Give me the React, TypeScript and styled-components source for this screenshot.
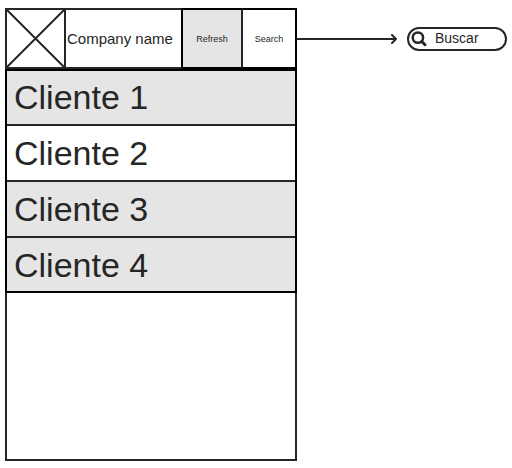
import React from "react";
import styled, { createGlobalStyle } from "styled-components";

const INK = "#262626";
const BLACK = "#000";
const SHADE = "#e5e5e5";

const GlobalStyle = createGlobalStyle`
  *, *::before, *::after { box-sizing: border-box; }
  body {
    margin: 0;
    background: #fff;
    color: ${INK};
    font-family: "Liberation Sans", Arial, sans-serif;
  }
`;

const Page = styled.main`
  display: flex;
  align-items: stretch;
  min-height: 100vh;
  padding: 8px 5px 7px;
`;

const Phone = styled.section`
  flex: 1;
  min-width: 0;
  display: flex;
  flex-direction: column;
`;

const Header = styled.header`
  display: flex;
  height: 61px;
`;

const Logo = styled.svg`
  flex: none;
  width: 61px;
  height: 61px;
`;

const CompanyName = styled.div`
  flex: 1;
  min-width: 0;
  display: flex;
  align-items: center;
  padding-left: 1px;
  border: solid ${INK};
  border-width: 2px 0;
  font-size: 15px;
  line-height: 18px;
  white-space: nowrap;
`;

const HeaderButton = styled.button<{ $active?: boolean }>`
  flex: none;
  width: ${(p) => (p.$active ? 62 : 54)}px;
  margin: 0;
  padding: 0;
  border: 2px solid ${BLACK};
  border-left-width: ${(p) => (p.$active ? 2 : 0)}px;
  border-right-color: ${(p) => (p.$active ? INK : BLACK)};
  border-radius: 0;
  background: ${(p) => (p.$active ? SHADE : "#fff")};
  color: ${INK};
  font-family: inherit;
  font-size: 9px;
  line-height: 12px;
  cursor: pointer;
`;

const ClientList = styled.ul`
  list-style: none;
  margin: 0;
  padding: 0;
  border: 2px solid ${BLACK};
`;

const ClientRow = styled.li<{ $shaded: boolean }>`
  display: flex;
  align-items: center;
  height: 56px;
  padding-left: 7px;
  border-bottom: 2px solid ${INK};
  background: ${(p) => (p.$shaded ? SHADE : "#fff")};
  font-size: 34px;
  line-height: 40px;

  &:first-child {
    height: 55px;
    padding-bottom: 1px;
  }
  &:last-child {
    height: 53px;
    border-bottom: 0;
  }
`;

const EmptyArea = styled.div`
  flex: 1;
  border: 2px solid ${INK};
  border-top: 0;
`;

const Arrow = styled.svg`
  flex: none;
  width: 110px;
  height: 61px;
`;

const SearchBox = styled.label`
  flex: none;
  display: flex;
  align-items: center;
  gap: 8px;
  width: 100px;
  height: 24px;
  margin-top: 19px;
  padding-left: 2px;
  border: 2px solid ${INK};
  border-radius: 12px;
`;

const SearchIcon = styled.svg`
  flex: none;
  width: 16px;
  height: 16px;
`;

const SearchInput = styled.input`
  flex: 1;
  min-width: 0;
  height: 18px;
  margin: 0 0 2px;
  padding: 0;
  border: 0;
  outline: 0;
  background: transparent;
  color: ${INK};
  font-family: inherit;
  font-size: 14px;
  line-height: 18px;

  &::placeholder {
    color: ${INK};
    opacity: 1;
  }
`;

const clients = [
  { name: "Cliente 1", shaded: true },
  { name: "Cliente 2", shaded: false },
  { name: "Cliente 3", shaded: true },
  { name: "Cliente 4", shaded: true },
];

export default function App() {
  return (
    <>
      <GlobalStyle />
      <Page>
        <Phone>
          <Header>
            <Logo viewBox="0 0 61 61" fill="none" stroke={INK} strokeWidth="2" aria-hidden="true">
              <rect x="1" y="1" width="59" height="59" />
              <path d="M1 1 60 60M60 1 1 60" />
            </Logo>
            <CompanyName>Company name</CompanyName>
            <HeaderButton type="button" $active>Refresh</HeaderButton>
            <HeaderButton type="button">Search</HeaderButton>
          </Header>
          <ClientList>
            {clients.map((client) => (
              <ClientRow key={client.name} $shaded={client.shaded}>
                {client.name}
              </ClientRow>
            ))}
          </ClientList>
          <EmptyArea />
        </Phone>
        <Arrow viewBox="0 0 110 61" fill="none" stroke={INK} strokeWidth="2" aria-hidden="true">
          <path d="M0 31H99M95 27 99 31 95 35" strokeLinecap="round" strokeLinejoin="round" />
        </Arrow>
        <SearchBox>
          <SearchIcon viewBox="0 0 16 16" fill="none" stroke={INK} aria-hidden="true">
            <circle cx="6.900" cy="6.600" r="5.200" strokeWidth="2.500" />
            <path d="M10.800 10.500 14 13.800" strokeWidth="2.900" strokeLinecap="round" />
          </SearchIcon>
          <SearchInput type="text" placeholder="Buscar" aria-label="Buscar" />
        </SearchBox>
      </Page>
    </>
  );
}
